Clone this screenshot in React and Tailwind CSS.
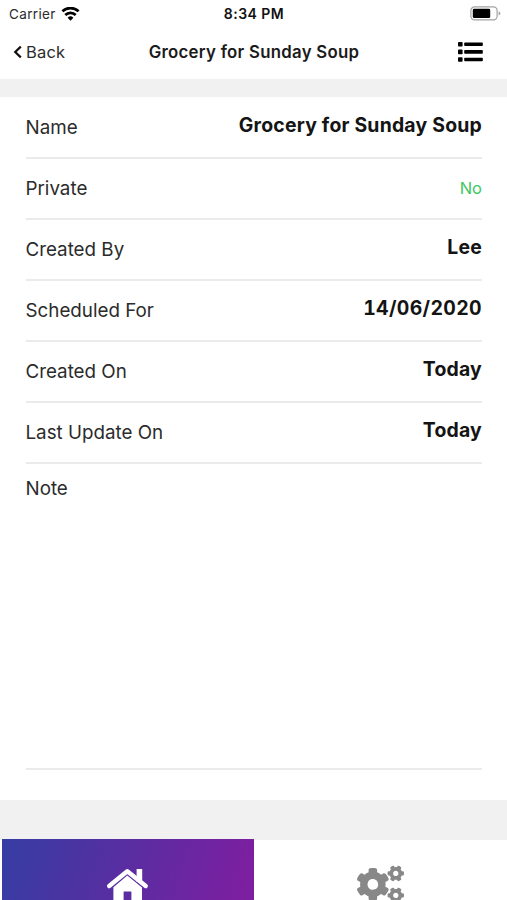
import { FaCogs } from "react-icons/fa"

const detalhes = [
    { label: "Name", value: "Grocery for Sunday Soup" },
    { label: "Private", value: "No", green: true },
    { label: "Created By", value: "Lee" },
    { label: "Scheduled For", value: "14/06/2020", date: true },
    { label: "Created On", value: "Today" },
    { label: "Last Update On", value: "Today" },
]

function Wifi() {
    return (
        <svg width="19" height="14" viewBox="0 0 20 15" fill="none" stroke="#000" strokeWidth="2.9">
            <path d="M1.3 4.6 A12.6 12.6 0 0 1 18.7 4.6" />
            <path d="M4.4 8.5 A8 8 0 0 1 15.6 8.5" />
            <path d="M10 14.6 L6.9 11.4 A4.4 4.4 0 0 1 13.1 11.4 Z" fill="#000" stroke="none" />
        </svg>
    )
}

function Battery() {
    return (
        <svg width="31" height="15" viewBox="0 0 31 15" fill="none">
            <rect x="0.9" y="0.9" width="26.2" height="13" rx="3.6" stroke="#a3a3a3" strokeWidth="1.2" />
            <rect x="2.8" y="2.7" width="17.4" height="9.4" rx="1.4" fill="#000" />
            <path d="M28.6 5.2 Q30.4 6 30.4 7.4 Q30.4 8.8 28.6 9.6 Z" fill="#a3a3a3" />
        </svg>
    )
}

function House() {
    return (
        <svg className="shrink-0" width="44" height="36" viewBox="0 0 44 36" fill="#fff">
            <rect x="30.6" y="1" width="5.6" height="13" rx="0.6" />
            <path d="M3.2 18 L21.3 3.2 L39.7 18" fill="none" stroke="#fff" strokeWidth="4.4" strokeLinecap="round" strokeLinejoin="round" />
            <path d="M21.3 7.6 L36 19.6 V36 H25.4 V23.6 H17.6 V36 H7.4 V19.2 Z" />
        </svg>
    )
}

function App() {
    return (
        <div className="flex h-[900px] w-full flex-col overflow-hidden bg-white font-['Inter',sans-serif] text-[#2b2b2b]">

            <div className="grid h-[27px] shrink-0 grid-cols-3 items-center pl-[9px] pr-[6px]">
                <div className="flex items-center gap-[5px]">
                    <span className="pt-px text-[13.5px] tracking-[0.35px]">Carrier</span>
                    <Wifi />
                </div>
                <span className="pr-[2px] text-center text-[14px] font-semibold tracking-[0.45px] text-[#111]">8:34 PM</span>
                <div className="flex justify-end">
                    <Battery />
                </div>
            </div>

            <div className="grid h-[52px] shrink-0 grid-cols-[1fr_auto_1fr] items-center pb-[2px] pl-[13px] pr-[24px]">
                <div className="flex items-center gap-[4px]">
                    <svg width="9" height="14" viewBox="0 0 9 14" fill="none" stroke="#111" strokeWidth="2.2">
                        <path d="M7.8 1.6 L2.2 7 L7.8 12.4" />
                    </svg>
                    <span className="text-[16.5px] tracking-[0.2px]">Back</span>
                </div>
                <h1 className="pl-[12px] pt-[2px] text-[16.8px] font-semibold tracking-[0.28px] text-[#1a1a1a]">Grocery for Sunday Soup</h1>
                <div className="flex justify-end">
                    <svg width="25" height="20" viewBox="0 0 25 20" fill="#000">
                        {[0, 7.6, 15.2].map((y) => (
                            <g key={y}>
                                <rect x="0" y={y} width="4.6" height="4.6" rx="0.8" />
                                <rect x="6.2" y={y + 0.5} width="18.6" height="3.6" rx="0.8" />
                            </g>
                        ))}
                    </svg>
                </div>
            </div>

            <div className="h-[18px] shrink-0 bg-[#f1f1f1]" />

            <div className="flex h-[703px] shrink-0 flex-col pl-[25.5px] pr-[25px] pt-px text-[18.8px]">
                {detalhes.map((d) => (
                    <div key={d.label} className="flex h-[61px] shrink-0 items-center justify-between border-b-2 border-[#ebebeb] pt-[2px]">
                        <span>{d.label}</span>
                        {d.green && <span className="pb-[2px] text-[16.5px] text-[#3fc763]">{d.value}</span>}
                        {d.date && <span className="pb-[5px] text-[19.4px] font-bold tracking-[0.35px] tabular-nums text-[#141414]">{d.value}</span>}
                        {!d.green && !d.date && <span className="pb-[5px] text-[19.4px] font-bold tracking-[0.22px] text-[#141414]">{d.value}</span>}
                    </div>
                ))}
                <div className="h-[306px] shrink-0 border-b-2 border-[#ebebeb] pt-[11px]">Note</div>
            </div>

            <div className="h-[40px] shrink-0 bg-[#f1f1f1]" />

            <div className="flex h-[60px] shrink-0">
                <div className="-mt-px ml-[2px] flex w-[252px] shrink-0 justify-center bg-[linear-gradient(105deg,#353da3,#7c1fa0_95%)] pt-[29px]">
                    <House />
                </div>
                <div className="flex flex-1 justify-center pt-[21px]">
                    <FaCogs className="h-[47px] w-[47px] shrink-0 text-[#888]" />
                </div>
            </div>

        </div>
    )
}

export default App
